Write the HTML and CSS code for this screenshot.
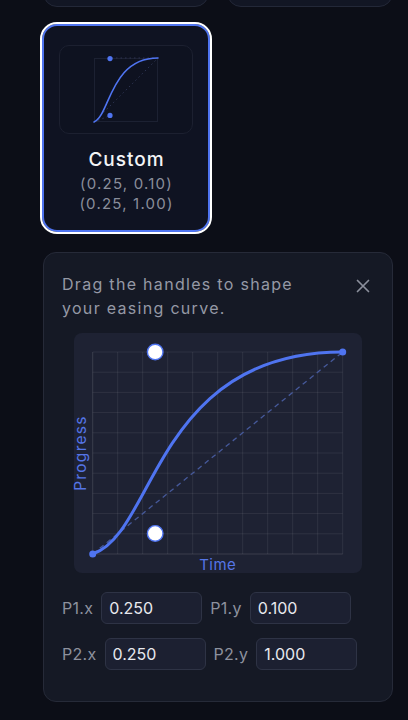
FILE: index.html
```html
<!DOCTYPE html>
<html lang="en">
<head>
<meta charset="utf-8">
<title>Easing editor</title>
<link rel="stylesheet" href="styles.css">
</head>
<body>
<main class="page">
  <section class="presets">
    <div class="card card-prev"></div>
    <div class="card card-prev"></div>
    <div class="card selected">
      <div class="preview">
        <svg class="mini" width="64" height="64" viewBox="0 0 64 64">
          <rect x="0.5" y="0.5" width="63" height="63" fill="none" stroke="#1c2132" stroke-width="1"/>
          <line x1="0" y1="64" x2="64" y2="0" stroke="#2c3350" stroke-width="1" stroke-dasharray="1.5 3"/>
          <line x1="0" y1="64" x2="16" y2="57.6" stroke="#2c3350" stroke-width="1" stroke-dasharray="1.5 3"/>
          <line x1="64" y1="0" x2="16" y2="0" stroke="#2c3350" stroke-width="1" stroke-dasharray="1.5 3"/>
          <path d="M0 64 C16 57.6 16 0 64 0" fill="none" stroke="#4f74f0" stroke-width="1.6" stroke-linecap="round"/>
          <circle cx="16" cy="57.4" r="2.6" fill="#4f74f0"/>
          <circle cx="16" cy="0.6" r="2.6" fill="#4f74f0"/>
        </svg>
      </div>
      <div class="card-title">Custom</div>
      <div class="card-sub">(0.25, 0.10)<br>(0.25, 1.00)</div>
    </div>
  </section>

  <section class="editor">
    <div class="editor-head">
      <p class="hint">Drag the handles to shape your easing curve.</p>
      <button class="close" aria-label="Close">
        <svg width="14" height="14" viewBox="0 0 14 14"><path d="M1.5 1.5 L12.5 12.5 M12.5 1.5 L1.5 12.5" stroke="#8b8f9c" stroke-width="1.7" stroke-linecap="round"/></svg>
      </button>
    </div>

    <div class="graph">
      <svg width="288" height="240" viewBox="0 0 288 240">
        <g stroke="rgba(255,255,255,0.075)" stroke-width="1">
          <line x1="43.7" y1="19" x2="43.7" y2="221"/>
          <line x1="68.7" y1="19" x2="68.7" y2="221"/>
          <line x1="93.7" y1="19" x2="93.7" y2="221"/>
          <line x1="118.7" y1="19" x2="118.7" y2="221"/>
          <line x1="143.7" y1="19" x2="143.7" y2="221"/>
          <line x1="168.7" y1="19" x2="168.7" y2="221"/>
          <line x1="193.7" y1="19" x2="193.7" y2="221"/>
          <line x1="218.7" y1="19" x2="218.7" y2="221"/>
          <line x1="243.7" y1="19" x2="243.7" y2="221"/>
          <line x1="18.7" y1="39.2" x2="268.7" y2="39.2"/>
          <line x1="18.7" y1="59.4" x2="268.7" y2="59.4"/>
          <line x1="18.7" y1="79.6" x2="268.7" y2="79.6"/>
          <line x1="18.7" y1="99.8" x2="268.7" y2="99.8"/>
          <line x1="18.7" y1="120" x2="268.7" y2="120"/>
          <line x1="18.7" y1="140.2" x2="268.7" y2="140.2"/>
          <line x1="18.7" y1="160.4" x2="268.7" y2="160.4"/>
          <line x1="18.7" y1="180.6" x2="268.7" y2="180.6"/>
          <line x1="18.7" y1="200.8" x2="268.7" y2="200.8"/>
          <line x1="268.7" y1="19" x2="268.7" y2="221"/>
          <line x1="18.7" y1="19" x2="268.7" y2="19"/>
        </g>
        <g stroke="rgba(255,255,255,0.13)" stroke-width="1">
          <line x1="18.7" y1="19" x2="18.7" y2="221"/>
          <line x1="18.7" y1="221" x2="268.7" y2="221"/>
        </g>
        <line x1="18.7" y1="221" x2="268.7" y2="19" stroke="#46599a" stroke-width="1.3" stroke-dasharray="5 4"/>
        <path d="M18.7 221 C81.2 200.8 81.2 19 268.7 19" fill="none" stroke="#4f74f0" stroke-width="3" stroke-linecap="round"/>
        <circle cx="18.7" cy="221" r="3.5" fill="#4f74f0"/>
        <circle cx="268.7" cy="19" r="3.5" fill="#4f74f0"/>
        <circle cx="81.2" cy="200.4" r="7.8" fill="#ffffff" stroke="#4f74f0" stroke-width="1.4"/>
        <circle cx="81.2" cy="19" r="7.8" fill="#ffffff" stroke="#4f74f0" stroke-width="1.4"/>
        <text class="axis" x="143.7" y="236.5" text-anchor="middle">Time</text>
        <text class="axis axis-y" x="0" y="0" text-anchor="middle" transform="translate(12 120) rotate(-90)">Progress</text>
      </svg>
    </div>

    <div class="fields">
      <div class="field-row">
        <label class="field-label" for="p1x">P1.x</label>
        <input class="field-input" id="p1x" type="text" value="0.250">
        <label class="field-label" for="p1y">P1.y</label>
        <input class="field-input" id="p1y" type="text" value="0.100">
      </div>
      <div class="field-row">
        <label class="field-label" for="p2x">P2.x</label>
        <input class="field-input" id="p2x" type="text" value="0.250">
        <label class="field-label" for="p2y">P2.y</label>
        <input class="field-input" id="p2y" type="text" value="1.000">
      </div>
    </div>
  </section>
</main>
</body>
</html>
```

FILE: styles.css
```css
* { box-sizing: border-box; }

html, body {
  margin: 0;
  padding: 0;
  background: #0c0e17;
  font-family: "Inter", "Noto Sans", sans-serif;
  overflow: hidden;
}

.page {
  width: 408px;
  padding: 0 15px 0 43px;
}

.presets {
  display: grid;
  grid-template-columns: 166px 166px;
  column-gap: 18px;
  row-gap: 18px;
  margin-top: -199px;
}

.card {
  height: 206px;
  border-radius: 14px;
  background: #121624;
  border: 1px solid #232838;
  overflow: hidden;
}

.card.selected {
  margin: -1px;
  height: 208px;
  background: #0f1322;
  border: 2px solid #4f74f0;
  outline: 2px solid #ffffff;
  border-radius: 15px;
  display: flex;
  flex-direction: column;
  align-items: center;
  padding: 19px 15px 0;
}

.preview {
  width: 134px;
  height: 89px;
  border: 1px solid #1c2030;
  border-radius: 10px;
  background: #0e1220;
  display: flex;
  align-items: center;
  justify-content: center;
}

.mini { display: block; overflow: visible; }

.card-title {
  margin-top: 13px;
  color: #f3f4f6;
  font-size: 19px;
  font-weight: 500;
  letter-spacing: 1px;
  line-height: 25px;
  padding-left: 1px;
}

.card-sub {
  margin-top: 2px;
  color: #8a8e9b;
  font-size: 15px;
  letter-spacing: 1.2px;
  line-height: 20px;
  text-align: center;
  padding-left: 1px;
}

.editor {
  margin-top: 21px;
  width: 350px;
  height: 450px;
  border: 1px solid #262a38;
  border-radius: 13px;
  background: #151925;
  padding: 19px 18px 0;
}

.editor-head {
  display: flex;
  justify-content: space-between;
  align-items: flex-start;
}

.hint {
  margin: 0;
  width: 262px;
  color: #9599a6;
  font-size: 16px;
  letter-spacing: 1.3px;
  line-height: 24px;
}

.close {
  margin: 7px 4px 0 0;
  padding: 0;
  border: 0;
  background: transparent;
  width: 14px;
  height: 14px;
  display: flex;
}

.graph {
  margin: 13px auto 0;
  width: 288px;
  height: 240px;
  border-radius: 8px;
  background: #1e2233;
}

.graph svg { display: block; overflow: visible; }

.axis {
  fill: #5575e6;
  font-family: "Inter", "Noto Sans", sans-serif;
  font-size: 15px;
  letter-spacing: 0.4px;
}

.axis-y {
  font-size: 15.5px;
  letter-spacing: 1.3px;
}

.fields {
  margin-top: 19px;
  display: flex;
  flex-direction: column;
  gap: 14px;
}

.field-row {
  display: flex;
  align-items: center;
  gap: 8px;
}

.field-label {
  color: #8d919e;
  font-size: 16px;
  letter-spacing: 0.3px;
}

.field-input {
  width: 101px;
  height: 32px;
  border: 1px solid #2e3345;
  border-radius: 6px;
  background: #1c2031;
  color: #e8e9ee;
  font-family: "Inter", "Noto Sans", sans-serif;
  font-size: 16px;
  padding: 0 7px;
  outline: none;
}
```
